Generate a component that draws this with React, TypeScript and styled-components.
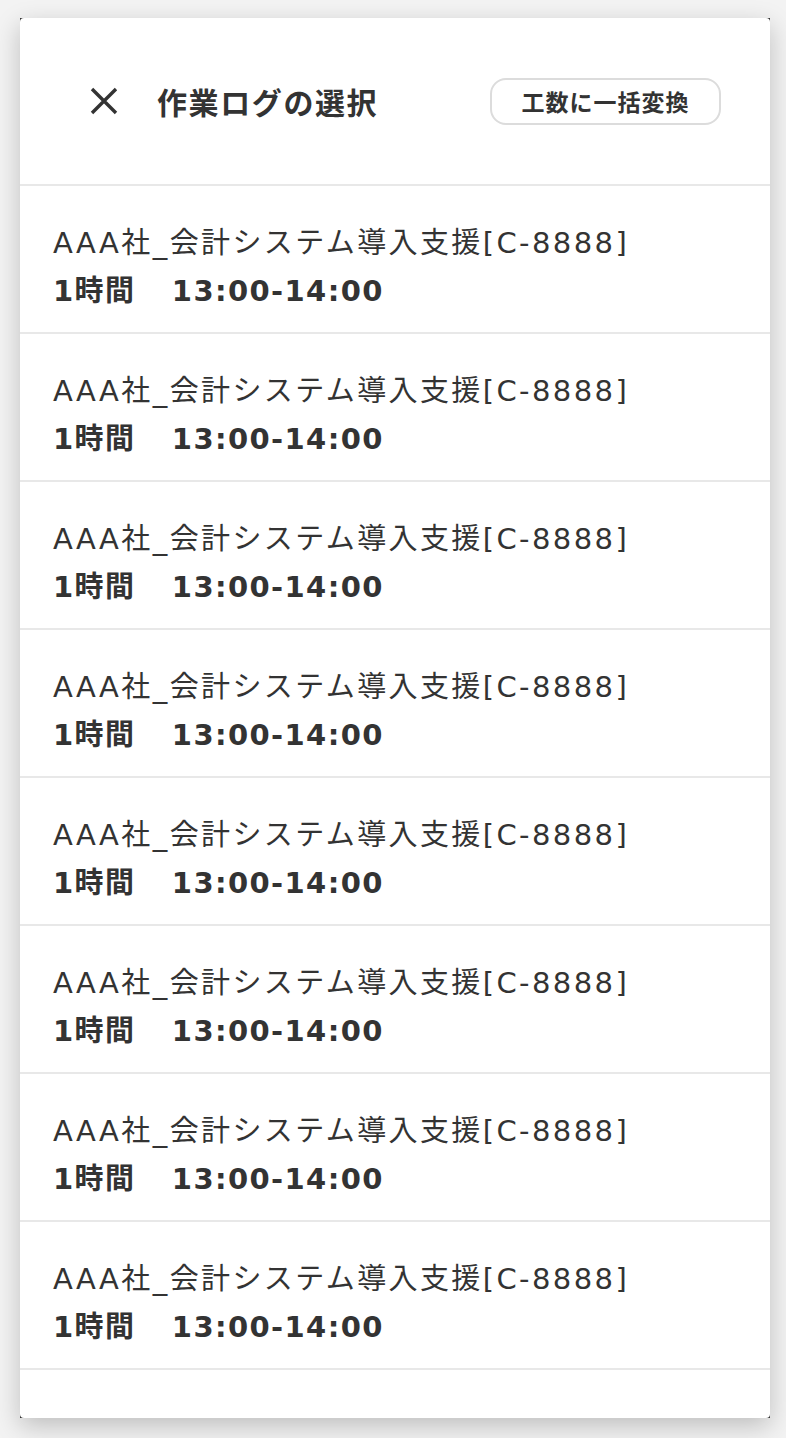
import React from 'react';
import styled, { createGlobalStyle } from 'styled-components';

const GlobalStyle = createGlobalStyle`
  html, body {
    margin: 0;
    padding: 0;
    background: #f3f3f3;
  }
  body {
    font-family: "DejaVu Sans", "Noto Sans CJK JP", sans-serif;
    color: #333;
  }
`;

const Page = styled.div`
  padding: 18px 16px 20px 20px;
`;

const Frame = styled.div`
  background: #333;
  box-shadow: 0 8px 24px rgba(0, 0, 0, 0.22);
`;

const Card = styled.div`
  background: #fff;
  border-radius: 4px;
  height: 1400px;
  display: flex;
  flex-direction: column;
  overflow: hidden;
`;

const Header = styled.header`
  height: 166px;
  display: flex;
  align-items: center;
  padding: 0 49px 0 70px;
  border-bottom: 2px solid #e8e8e8;
`;

const CloseButton = styled.button`
  width: 28px;
  height: 28px;
  padding: 0;
  border: none;
  background: none;
  display: flex;
  align-items: center;
  justify-content: center;
  cursor: pointer;
`;

const Title = styled.h1`
  margin: 0 0 0 39px;
  font-family: "Noto Sans CJK JP", sans-serif;
  font-size: 30px;
  font-weight: 700;
  letter-spacing: 1.6px;
  flex: 1;
`;

const ConvertButton = styled.button`
  width: 231px;
  height: 47px;
  border: 2px solid #dcdcdc;
  border-radius: 16px;
  background: #fff;
  font-family: "Noto Sans CJK JP", sans-serif;
  font-size: 23px;
  font-weight: 700;
  letter-spacing: 1px;
  color: #333;
  cursor: pointer;
`;

const List = styled.ul`
  list-style: none;
  margin: 0;
  padding: 0;
`;

const Row = styled.li`
  height: 148px;
  box-sizing: border-box;
  padding: 33px 33px 0;
  border-bottom: 2px solid #e8e8e8;
`;

const RowTitle = styled.div`
  font-size: 29px;
  line-height: 48px;
  font-weight: 400;
  letter-spacing: 2.4px;
  white-space: nowrap;
`;

const RowTime = styled.div`
  font-size: 29px;
  line-height: 48px;
  font-weight: 700;
  letter-spacing: 1.4px;
  white-space: nowrap;
`;

const TimeRange = styled.span`
  margin-left: 6px;
`;

const logs = Array.from({ length: 8 }, (_, i) => ({
  id: i,
  name: 'AAA社_会計システム導入支援[C-8888]',
  hours: '1時間',
  range: '13:00-14:00',
}));

export default function App() {
  return (
    <>
      <GlobalStyle />
      <Page>
        <Frame>
          <Card>
            <Header>
              <CloseButton aria-label="閉じる">
                <svg width="28" height="28" viewBox="0 0 28 28">
                  <path d="M2 2 L26 26 M26 2 L2 26" stroke="#333" strokeWidth="3.4" />
                </svg>
              </CloseButton>
              <Title>作業ログの選択</Title>
              <ConvertButton>工数に一括変換</ConvertButton>
            </Header>
            <List>
              {logs.map((log) => (
                <Row key={log.id}>
                  <RowTitle>{log.name}</RowTitle>
                  <RowTime>
                    {log.hours}　<TimeRange>{log.range}</TimeRange>
                  </RowTime>
                </Row>
              ))}
            </List>
          </Card>
        </Frame>
      </Page>
    </>
  );
}
